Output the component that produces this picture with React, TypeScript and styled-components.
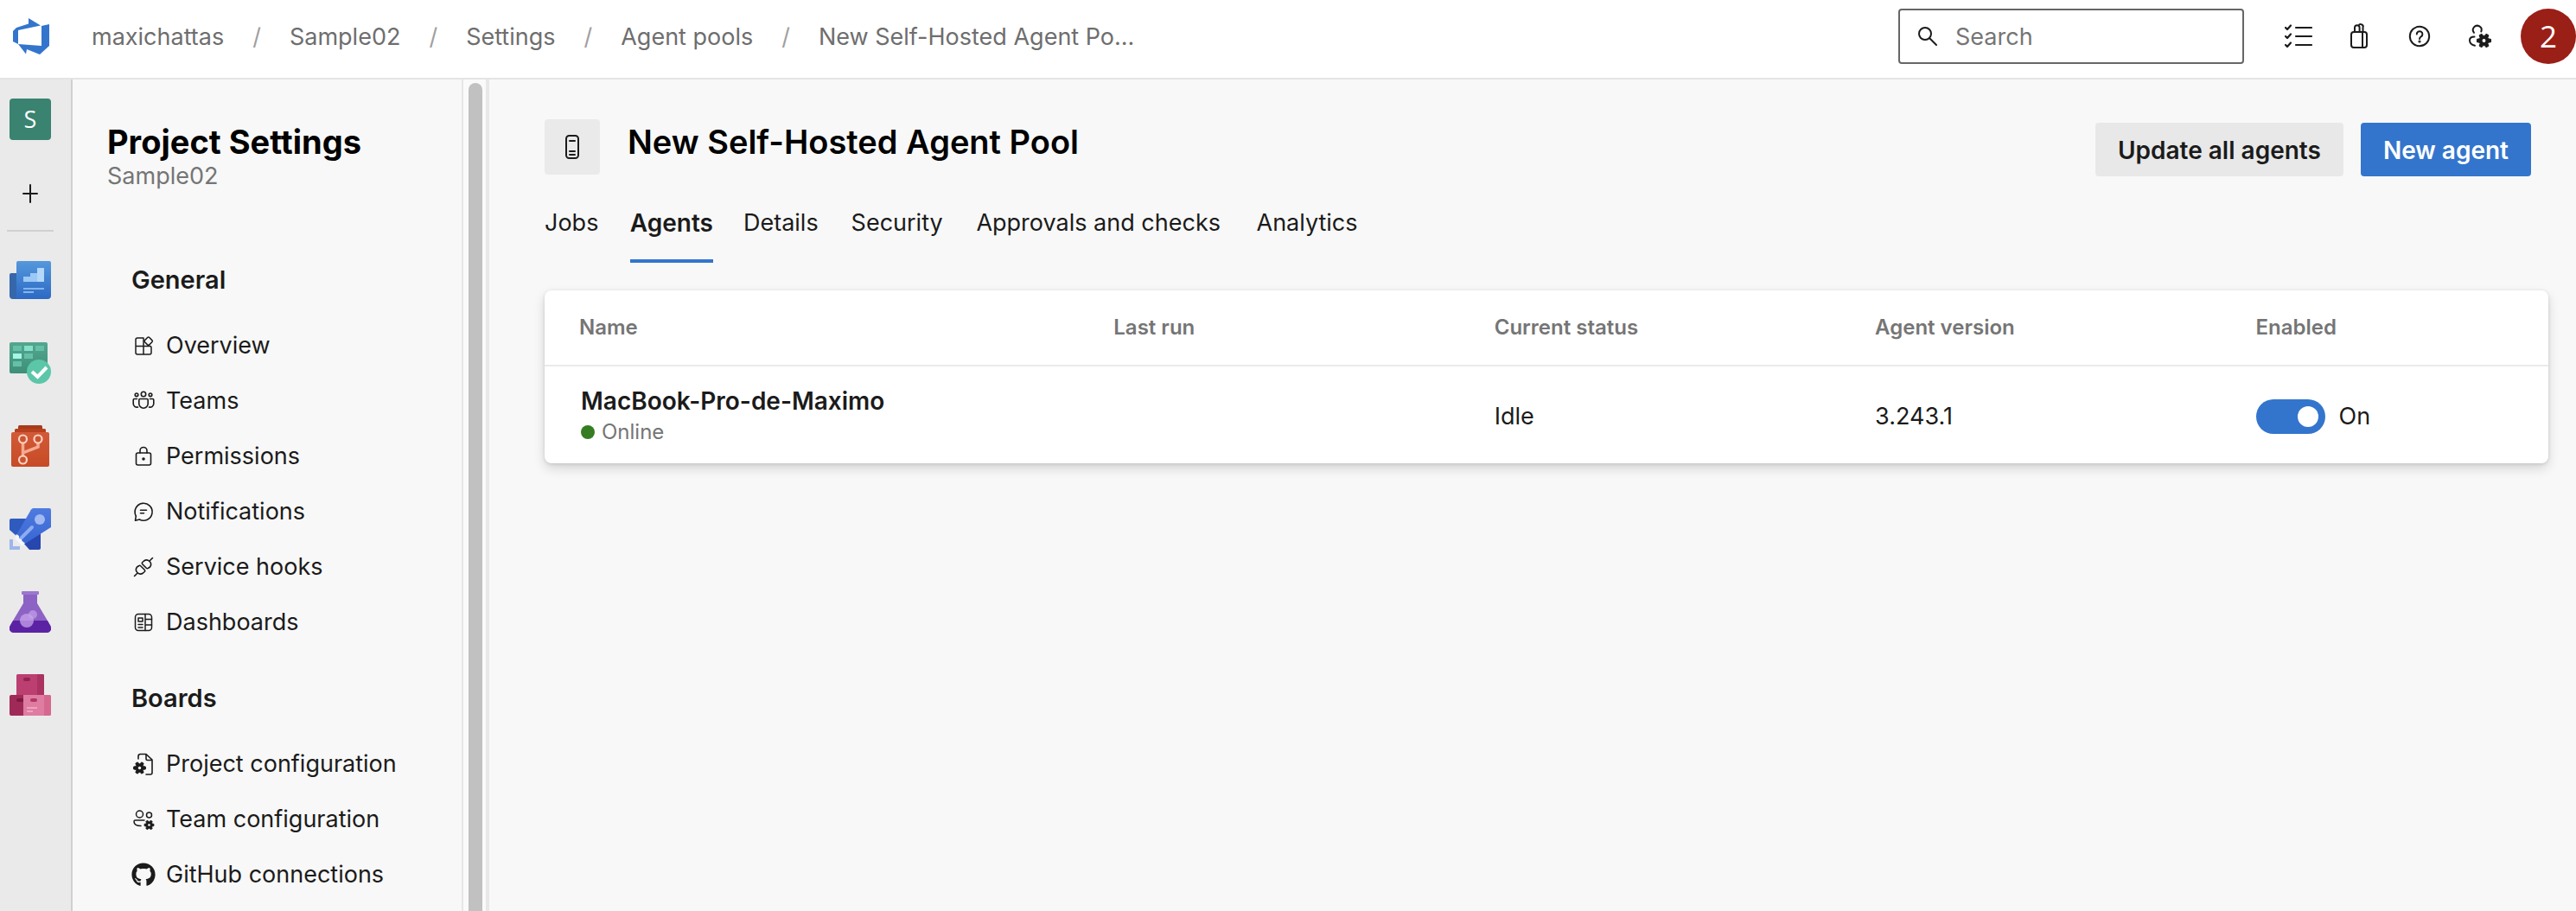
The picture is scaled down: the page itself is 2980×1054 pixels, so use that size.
import React from "react";
import styled, { createGlobalStyle } from "styled-components";
import { FaGithub } from "react-icons/fa";

const Global = createGlobalStyle`
  * { box-sizing: border-box; }
  body {
    margin: 0;
    background: #f8f8f8;
    color: #1b1b1b;
    font-family: Inter, "Liberation Sans", sans-serif;
    font-size: 27px;
    line-height: 32px;
  }
  a { color: inherit; text-decoration: none; }
  button { font: inherit; color: inherit; border: 0; background: none; padding: 0; cursor: pointer; }
  h1, h2, h3, p, ul, ol { margin: 0; padding: 0; list-style: none; }
`;

const Page = styled.div`
  display: flex;
  flex-direction: column;
  height: 100vh;
  overflow: hidden;
`;

const Header = styled.header`
  display: flex;
  align-items: center;
  flex: none;
  height: 92px;
  padding-bottom: 6px;
  background: #fff;
  border-bottom: 2px solid #e4e4e4;
`;

const LogoLink = styled.a`
  display: flex;
  justify-content: center;
  width: 72px;
  margin-right: 34px;
`;

const Crumbs = styled.ol`
  display: flex;
  flex: 1;
  && { padding-top: 2px; }
  color: #6e6e6e;
`;

const Crumb = styled.li`
  white-space: nowrap;
  & + &::before {
    content: "/";
    color: #a0a0a0;
    margin: 0 33px;
  }
`;

const SearchBox = styled.label`
  display: flex;
  align-items: center;
  gap: 20px;
  width: 400px;
  height: 64px;
  padding-left: 20px;
  border: 2px solid #666;
  border-radius: 4px;
`;

const SearchInput = styled.input`
  min-width: 0;
  flex: 1;
  padding: 2px 0 0;
  border: 0;
  outline: 0;
  background: none;
  font: inherit;
  color: inherit;
  &::placeholder { color: #757575; opacity: 1; }
`;

const HeaderActions = styled.div`
  display: flex;
  align-items: center;
  gap: 32px;
  margin-left: 44px;
`;

const IconButton = styled.button`
  display: flex;
  align-items: center;
  justify-content: center;
  width: 38px;
  height: 40px;
`;

const Avatar = styled.button`
  width: 64px;
  height: 64px;
  margin-left: 28px;
  border-radius: 50%;
  background: #9a1f17;
  color: #fff;
  font-size: 35px;
  font-family: "Open Sans", sans-serif;
`;

const Body = styled.div`
  display: flex;
  flex: 1;
  min-height: 0;
`;

const Rail = styled.nav`
  display: flex;
  flex-direction: column;
  align-items: center;
  flex: none;
  width: 84px;
  padding: 22px 12px 0 0;
  background: #eaeaea;
  border-right: 2px solid #d0d0d0;
`;

const ProjectTile = styled.a`
  display: flex;
  align-items: center;
  justify-content: center;
  width: 48px;
  height: 48px;
  border-radius: 4px;
  background: #398370;
  color: #fff;
  font-family: "Open Sans", sans-serif;
  font-size: 27px;
`;

const AddButton = styled(IconButton)`
  margin-top: 42px;
`;

const RailDivider = styled.hr`
  width: 54px;
  height: 2px;
  margin: 22px 0 8px;
  border: 0;
  background: #d0d0d0;
`;

const RailItem = styled.a`
  display: flex;
  align-items: center;
  height: 96px;
`;

const Sidebar = styled.aside`
  flex: none;
  width: 452px;
  padding: 50px 0 0 40px;
  border-right: 2px solid #e6e6e6;
  overflow: hidden;
`;

const SideTitle = styled.h2`
  padding-bottom: 2px;
  font-size: 38px;
  line-height: 44px;
  font-weight: 700;
  color: #000;
`;

const SideSubtitle = styled.p`
  color: #757575;
`;

const GroupTitle = styled.h3`
  padding: 0 28px;
  font-size: 29px;
  line-height: 32px;
  font-weight: 600;
`;

const Group = styled.section`
  padding-top: 88px;
  & + & { padding-top: 40px; }
`;

const GroupList = styled.ul`
  && { padding-top: 28px; }
`;

const SideLink = styled.a`
  display: flex;
  align-items: center;
  gap: 12px;
  height: 64px;
  padding-left: 28px;
  white-space: nowrap;
  svg { flex: none; }
`;

const ScrollTrack = styled.div`
  flex: none;
  width: 30px;
  padding: 4px 0 0 6px;
  background: #fafafa;
  border-right: 4px solid #e8e8e8;
`;

const ScrollThumb = styled.div`
  width: 16px;
  height: 100%;
  border-radius: 8px 8px 0 0;
  background: #c1c1c1;
`;

const Main = styled.main`
  flex: 1;
  min-width: 0;
  padding: 46px 32px 0 64px;
`;

const TitleRow = styled.div`
  display: flex;
  align-items: flex-start;
  padding-right: 20px;
`;

const PoolIcon = styled.div`
  display: flex;
  align-items: center;
  justify-content: center;
  width: 64px;
  height: 64px;
  margin-right: 32px;
  border-radius: 4px;
  background: #eaeaea;
`;

const PageTitle = styled.h1`
  flex: 1;
  && { padding-top: 4px; }
  font-size: 38px;
  line-height: 44px;
  font-weight: 600;
  color: #000;
`;

const Actions = styled.div`
  display: flex;
  gap: 20px;
  padding-top: 4px;
`;

const ActionButton = styled.button<{ $primary?: boolean }>`
  height: 62px;
  padding: 2px 26px 0;
  border-radius: 4px;
  font-size: 28px;
  font-weight: 600;
  white-space: nowrap;
  background: ${(p) => (p.$primary ? "#3375cd" : "#e8e8e8")};
  color: ${(p) => (p.$primary ? "#fff" : "#1b1b1b")};
`;

const Tabs = styled.div`
  display: flex;
  gap: 35px;
  padding-top: 26px;
`;

const Tab = styled.button<{ $active?: boolean }>`
  display: grid;
  align-content: start;
  justify-items: start;
  height: 74px;
  padding-top: 12px;
  white-space: nowrap;
  font-size: ${(p) => (p.$active ? 28 : 27)}px;
  font-weight: ${(p) => (p.$active ? 600 : 400)};
  border-bottom: 4px solid ${(p) => (p.$active ? "#3375cd" : "transparent")};
  /* Reserves the semibold width so that tabs keep their place when selected. */
  &::after {
    content: attr(data-label);
    height: 0;
    overflow: hidden;
    visibility: hidden;
    font-weight: 600;
  }
`;

const Card = styled.section`
  margin-top: 32px;
  border-radius: 8px;
  background: #fff;
  box-shadow: 0 6px 14px rgba(0, 0, 0, 0.14), 0 1px 4px rgba(0, 0, 0, 0.12);
`;

const Table = styled.table`
  width: 100%;
  table-layout: fixed;
  border-collapse: collapse;
  text-align: left;
`;

const Column = styled.col<{ $share?: string }>`
  width: ${(p) => p.$share ?? "auto"};
`;

const HeadCell = styled.th`
  height: 87px;
  padding: 0;
  border-bottom: 2px solid #eaeaea;
  color: #757575;
  font-size: 24px;
  font-weight: 600;
  &:first-child { padding-left: 40px; }
`;

const Cell = styled.td`
  height: 113px;
  padding: 4px 0 0;
  &:first-child { padding-left: 42px; }
`;

const AgentName = styled.a`
  display: block;
  font-size: 28px;
  font-weight: 600;
`;

const Status = styled.div`
  display: flex;
  align-items: center;
  gap: 8px;
  padding-top: 4px;
  color: #757575;
  font-size: 24px;
  &::before {
    content: "";
    width: 16px;
    height: 16px;
    border-radius: 50%;
    background: #367c22;
  }
`;

const ToggleLabel = styled.label`
  display: flex;
  align-items: center;
  gap: 16px;
`;

const Toggle = styled.input`
  appearance: none;
  display: flex;
  align-items: center;
  justify-content: flex-end;
  width: 80px;
  height: 40px;
  margin: 0;
  padding: 8px;
  border-radius: 20px;
  background: #3375cd;
  &::before {
    content: "";
    width: 24px;
    height: 24px;
    border-radius: 50%;
    background: #fff;
  }
`;

type IconProps = { children: React.ReactNode; size?: number; stroke?: number };

const Line = ({ children, size = 28, stroke = 2 }: IconProps) => (
  <svg width={size} height={size} viewBox={`0 0 ${size} ${size}`} fill="none" stroke="#1b1b1b"
    strokeWidth={stroke} strokeLinecap="round" strokeLinejoin="round" aria-hidden="true">
    {children}
  </svg>
);

const gearPoints = (cx: number, cy: number, r: number) => {
  const pts: string[] = [];
  for (let i = 0; i < 6; i++) {
    const base = (i * Math.PI) / 3 + Math.PI / 6;
    [[-0.4, 0.68], [-0.2, 1], [0.2, 1], [0.4, 0.68]].forEach(([a, k]) => {
      pts.push(`${cx + Math.sin(base + a) * r * k},${cy - Math.cos(base + a) * r * k}`);
    });
  }
  return pts.join(" ");
};

const Gear = ({ cx, cy, r, hole = "#f8f8f8" }: { cx: number; cy: number; r: number; hole?: string }) => (
  <>
    <polygon points={gearPoints(cx, cy, r)} fill="#1b1b1b" stroke="#1b1b1b" strokeWidth="1" />
    <circle cx={cx} cy={cy} r={r * 0.24} fill={hole} stroke="none" />
  </>
);

const OverviewIcon = () => (
  <Line stroke={1.5}>
    <path d="M14 5H7a2 2 0 0 0-2 2v15a2 2 0 0 0 2 2h14a2 2 0 0 0 2-2v-6a1.500 1.500 0 0 0-1.500-1.500H5M14 5v19" />
    <rect x="16" y="5" width="7.400" height="7.400" rx="1.500" transform="rotate(45 19.700 8.700)" />
  </Line>
);
const TeamsIcon = () => (
  <Line stroke={1.6}>
    <circle cx="14" cy="6" r="2.700" /><circle cx="6" cy="6.800" r="1.800" /><circle cx="22" cy="6.800" r="1.800" />
    <path d="M10 11.500h8a1.200 1.200 0 0 1 1.200 1.200V17a5.200 5.200 0 0 1-10.400 0v-4.300A1.200 1.200 0 0 1 10 11.500z" />
    <path d="M6.500 11.500h-3a1.300 1.300 0 0 0-1.300 1.300v4.200a4.200 4.200 0 0 0 5.300 4M21.500 11.500h3a1.300 1.300 0 0 1 1.300 1.300v4.200a4.200 4.200 0 0 1-5.300 4" />
  </Line>
);
const LockIcon = () => (
  <Line stroke={1.6}>
    <rect x="5.500" y="10" width="17" height="14" rx="2" />
    <path d="M10 10V7.500a4 4 0 0 1 8 0V10" /><circle cx="14" cy="17" r="1" fill="#1b1b1b" />
  </Line>
);
const NotifyIcon = () => (
  <Line stroke={1.6}>
    <path d="M4.500 24.300 5.300 19a10 10 0 1 1 4 4z" /><path d="M10.500 12.300h7M10.500 15.800h4" />
  </Line>
);
const PlugIcon = () => (
  <Line stroke={1.6}>
    <path d="M3.500 24.500 6.500 21.500M8.500 12.800a1.500 1.500 0 0 1 2.200 0l4.500 4.500a1.500 1.500 0 0 1 0 2.200L13.500 21a5 5 0 0 1-7-7z" />
    <path d="M24.500 3.500 21.500 6.500M19.500 15.200a1.500 1.500 0 0 1-2.200 0l-4.500-4.500a1.500 1.500 0 0 1 0-2.200L14.500 7a5 5 0 0 1 7 7z" />
  </Line>
);
const DashboardIcon = () => (
  <Line stroke={1.5}>
    <rect x="4.500" y="4.500" width="19" height="19" rx="3.500" />
    <path d="M16 4.500v19M16 10.500h7.500M16 17h7.500M8 16.500h5M8 20h5" /><rect x="8" y="9" width="5" height="4" />
  </Line>
);
const ProjectConfigIcon = () => (
  <Line stroke={1.6}>
    <path d="M8 8V5a2.500 2.500 0 0 1 2.500-2.500H17L24 9v15a2 2 0 0 1-2 2h-5M17 2.500V8a1.500 1.500 0 0 0 1.500 1.500H24" />
    <Gear cx={9.5} cy={18.5} r={7} />
  </Line>
);
const TeamConfigIcon = () => (
  <Line stroke={1.5}>
    <circle cx="9.500" cy="8" r="4" /><circle cx="20.500" cy="9" r="3" />
    <path d="M15 15H4.500A1.500 1.500 0 0 0 3 16.500C3 19.500 6 21.500 11 21.500" />
    <Gear cx={20.5} cy={20.5} r={5.5} />
  </Line>
);

const SearchIcon = () => (
  <Line size={24}><circle cx="9" cy="9" r="7" /><path d="m14 14 8 8" /></Line>
);
const TasksIcon = () => (
  <Line size={36} stroke={2.2}>
    <path d="M15 8h18M15 18h18M15 28h18M3 8l2 2L9 5.500M3 18l2 2 4-4.500M3 28l2 2 4-4.500" />
  </Line>
);
const BagIcon = () => (
  <Line size={32} stroke={2}>
    <rect x="7" y="11" width="18" height="18" rx="3" />
    <path d="M20 11v18M11 11V6a2.800 2.800 0 0 1 5.600 0v5M15.400 3.700A2.800 2.800 0 0 1 20.500 6v5" />
  </Line>
);
const HelpIcon = () => (
  <Line size={28}>
    <circle cx="14" cy="14" r="11.200" /><path d="M10.800 11.500a3.300 3.300 0 1 1 5 2.800c-1.300.9-1.800 1.300-1.800 2.700" />
    <circle cx="14" cy="20" r=".6" fill="#1b1b1b" />
  </Line>
);
const UserGearIcon = () => (
  <Line size={32} stroke={2}>
    <path d="M9 11.800A4.900 4.900 0 1 1 17.300 10.500M9.500 16.500C5.500 16.500 4 18 4 20.500c0 3 2 5.500 6 6.300" />
    <Gear cx={20.5} cy={21} r={8.2} hole="#fff" />
  </Line>
);
const PlusIcon = () => (
  <Line size={24}><path d="M12 2v20M4 12h16" /></Line>
);
const ServerIcon = () => (
  <Line size={32}>
    <rect x="9" y="3" width="14" height="26" rx="3.500" /><path d="M13 9h6M13 21h6M13 25h6" />
  </Line>
);

const Logo = () => (
  <svg width="44" height="44" viewBox="0 0 44 44" fill="#3375cd" aria-hidden="true">
    <path d="M19 1 33 9.500 7 15v16L1 28V16l4-4 14-4.500z" />
    <path d="M34 10 43 8v25L32 43 17 37l-1 5.500L7 31l27 2z" />
  </svg>
);

const BoardsOverview = () => (
  <svg width="48" height="48" viewBox="0 0 48 48" aria-hidden="true">
    <defs><linearGradient id="ov" x2="0" y2="1"><stop stopColor="#5598dc" /><stop offset="1" stopColor="#2c69c4" /></linearGradient></defs>
    <path d="M2 16h8v30H4a4 4 0 0 1-4-4V18a2 2 0 0 1 2-2z" fill="#3567ab" />
    <path d="M10 2h36a2 2 0 0 1 2 2v38a4 4 0 0 1-4 4H4a4 4 0 0 0 4-4V4a2 2 0 0 1 2-2z" fill="url(#ov)" />
    <path d="M16 20h8v-4h8v10H16z" fill="#9cc8f5" /><path d="M32 10h8v16h-8z" fill="#b4d7fa" />
    <path d="M16 33h24v2H16zM16 37h12v2H16z" fill="#84b5ee" />
  </svg>
);
const Boards = () => (
  <svg width="48" height="48" viewBox="0 0 48 48" aria-hidden="true">
    <defs><linearGradient id="bo" x2="0" y2="1"><stop stopColor="#53a78e" /><stop offset="1" stopColor="#3f8f78" /></linearGradient></defs>
    <rect width="44" height="36" rx="2" fill="url(#bo)" />
    <path d="M4 4h10v6H4zM30 4h10v6H30zM17 13h10v6H17zM4 22h10v6H4z" fill="#66c0a8" />
    <path d="M17 4h10v6H17z" fill="#85e0ca" /><path d="M4 13h10v6H4z" fill="#a4f7e6" />
    <circle cx="34" cy="34" r="14" fill="#5bc6a8" />
    <path d="m26 34 6.500 6L43 29" fill="none" stroke="#fff" strokeWidth="4" />
  </svg>
);
const Repos = () => (
  <svg width="48" height="48" viewBox="0 0 48 48" aria-hidden="true">
    <defs><linearGradient id="re" x2="0" y2="1"><stop stopColor="#d25a38" /><stop offset="1" stopColor="#c74a25" /></linearGradient></defs>
    <rect x="10" width="28" height="8" rx="1.500" fill="#a83a1d" /><rect x="6" y="4" width="36" height="8" rx="1.500" fill="#b7401e" />
    <rect x="2" y="8" width="44" height="40" rx="2" fill="url(#re)" />
    <path d="M15.500 20v16M33 20v5l-17.500 7v4" fill="none" stroke="#f4aa90" strokeWidth="3.500" />
    <g fill="#ca5431" stroke="#fbd0bf" strokeWidth="2.200"><circle cx="15.500" cy="16" r="4.500" /><circle cx="33" cy="16" r="4.500" /><circle cx="15.500" cy="40" r="4.500" /></g>
  </svg>
);
const Pipelines = () => (
  <svg width="48" height="48" viewBox="0 0 48 48" aria-hidden="true">
    <defs><linearGradient id="pi" x2="0" y2="1"><stop stopColor="#4f7be0" /><stop offset="1" stopColor="#3866d2" /></linearGradient></defs>
    <path d="M2 12h18L8 32l-8-7V14a2 2 0 0 1 2-2z" fill="#2f5bbf" /><path d="M36 28v18a2 2 0 0 1-2 2H23l-7-8z" fill="#2747ae" />
    <path d="M27 0h19a2 2 0 0 1 2 2v20L18 41 8 31 25 1.500z" fill="url(#pi)" />
    <circle cx="35" cy="13" r="6" fill="#a2b9f2" /><path d="m13 35 13-13" stroke="#8fabef" strokeWidth="4" strokeLinecap="round" />
    <path d="m8 30 3 2v3l3 1v3l4 1-3 4-9-9z" fill="#f4f6fc" /><path d="M0 36h4v8h8v4H0z" fill="#9fb6ec" />
  </svg>
);
const TestPlans = () => (
  <svg width="48" height="48" viewBox="0 0 48 48" aria-hidden="true">
    <path d="M16 4h16v10l15.500 26c2 4-.5 8-4.500 8H5c-4 0-6.500-4-4.500-8L16 14z" fill="#8c62c4" />
    <path d="M4.100 34h39.800l3.600 6.500c2 4-1 7.500-4.500 7.500H5c-3.500 0-6.500-3.500-4.500-7.500z" fill="#5b23a4" />
    <rect x="14" width="20" height="4" rx="1" fill="#9b78cf" />
    <circle cx="20" cy="34" r="8" fill="#c9a6ee" fillOpacity=".75" /><circle cx="27" cy="27" r="5" fill="#c9a6ee" fillOpacity=".65" />
  </svg>
);
const Artifacts = () => (
  <svg width="48" height="48" viewBox="0 0 48 48" aria-hidden="true">
    <rect x="8" width="32" height="26" rx="1.500" fill="#bb3f70" /><path d="M32 0h6.500A1.500 1.500 0 0 1 40 1.500V24h-8z" fill="#aa3362" />
    <rect x="16" y="4" width="8" height="4" rx="2" fill="#8f2450" />
    <path d="M2 24h14v24H2a2 2 0 0 1-2-2V26a2 2 0 0 1 2-2z" fill="#9f2a58" /><path d="M10 28h6v4h-6a2 2 0 0 1 0-4z" fill="#7b1a40" />
    <path d="M16 24h30a2 2 0 0 1 2 2v20a2 2 0 0 1-2 2H16z" fill="#df7ca1" /><path d="M40 24h6a2 2 0 0 1 2 2v20a2 2 0 0 1-2 2h-6z" fill="#d5688f" />
    <rect x="24" y="28" width="8" height="4" rx="2" fill="#b23766" /><path d="M20 38h12v2H20zM20 42h7v2h-7z" fill="#f0a3bf" />
  </svg>
);

const crumbs = ["maxichattas", "Sample02", "Settings", "Agent pools", "New Self-Hosted Agent Po..."];
const services = [
  { name: "Overview", icon: <BoardsOverview /> },
  { name: "Boards", icon: <Boards /> },
  { name: "Repos", icon: <Repos /> },
  { name: "Pipelines", icon: <Pipelines /> },
  { name: "Test Plans", icon: <TestPlans /> },
  { name: "Artifacts", icon: <Artifacts /> },
];
const groups = [
  {
    title: "General",
    items: [
      { label: "Overview", icon: <OverviewIcon /> },
      { label: "Teams", icon: <TeamsIcon /> },
      { label: "Permissions", icon: <LockIcon /> },
      { label: "Notifications", icon: <NotifyIcon /> },
      { label: "Service hooks", icon: <PlugIcon /> },
      { label: "Dashboards", icon: <DashboardIcon /> },
    ],
  },
  {
    title: "Boards",
    items: [
      { label: "Project configuration", icon: <ProjectConfigIcon /> },
      { label: "Team configuration", icon: <TeamConfigIcon /> },
      { label: "GitHub connections", icon: <FaGithub size={28} /> },
    ],
  },
];
const tabs = ["Jobs", "Agents", "Details", "Security", "Approvals and checks", "Analytics"];
const columns = [
  { label: "Name", share: "28.4%" },
  { label: "Last run", share: "19%" },
  { label: "Current status", share: "19%" },
  { label: "Agent version", share: "19%" },
  { label: "Enabled" },
];

export default function App() {
  return (
    <Page>
      <Global />
      <Header>
        <LogoLink href="#" aria-label="Azure DevOps"><Logo /></LogoLink>
        <Crumbs>
          {crumbs.map((c) => <Crumb key={c}><a href="#">{c}</a></Crumb>)}
        </Crumbs>
        <SearchBox>
          <SearchIcon />
          <SearchInput type="text" placeholder="Search" aria-label="Search" />
        </SearchBox>
        <HeaderActions>
          <IconButton aria-label="Work items"><TasksIcon /></IconButton>
          <IconButton aria-label="Marketplace"><BagIcon /></IconButton>
          <IconButton aria-label="Help"><HelpIcon /></IconButton>
          <IconButton aria-label="User settings"><UserGearIcon /></IconButton>
        </HeaderActions>
        <Avatar>2</Avatar>
      </Header>
      <Body>
        <Rail>
          <ProjectTile href="#">S</ProjectTile>
          <AddButton aria-label="Add"><PlusIcon /></AddButton>
          <RailDivider />
          {services.map((s) => <RailItem key={s.name} href="#" aria-label={s.name}>{s.icon}</RailItem>)}
        </Rail>
        <Sidebar>
          <SideTitle>Project Settings</SideTitle>
          <SideSubtitle>Sample02</SideSubtitle>
          {groups.map((g) => (
            <Group key={g.title}>
              <GroupTitle>{g.title}</GroupTitle>
              <GroupList>
                {g.items.map((i) => (
                  <li key={i.label}><SideLink href="#">{i.icon}{i.label}</SideLink></li>
                ))}
              </GroupList>
            </Group>
          ))}
        </Sidebar>
        <ScrollTrack><ScrollThumb /></ScrollTrack>
        <Main>
          <TitleRow>
            <PoolIcon><ServerIcon /></PoolIcon>
            <PageTitle>New Self-Hosted Agent Pool</PageTitle>
            <Actions>
              <ActionButton>Update all agents</ActionButton>
              <ActionButton $primary>New agent</ActionButton>
            </Actions>
          </TitleRow>
          <Tabs role="tablist">
            {tabs.map((t) => (
              <Tab key={t} role="tab" data-label={t} $active={t === "Agents"} aria-selected={t === "Agents"}>{t}</Tab>
            ))}
          </Tabs>
          <Card>
            <Table>
              <colgroup>{columns.map((c) => <Column key={c.label} $share={c.share} />)}</colgroup>
              <thead>
                <tr>{columns.map((c) => <HeadCell key={c.label} scope="col">{c.label}</HeadCell>)}</tr>
              </thead>
              <tbody>
                <tr>
                  <Cell>
                    <AgentName href="#">MacBook-Pro-de-Maximo</AgentName>
                    <Status>Online</Status>
                  </Cell>
                  <Cell />
                  <Cell>Idle</Cell>
                  <Cell>3.243.1</Cell>
                  <Cell>
                    <ToggleLabel><Toggle type="checkbox" role="switch" defaultChecked />On</ToggleLabel>
                  </Cell>
                </tr>
              </tbody>
            </Table>
          </Card>
        </Main>
      </Body>
    </Page>
  );
}
